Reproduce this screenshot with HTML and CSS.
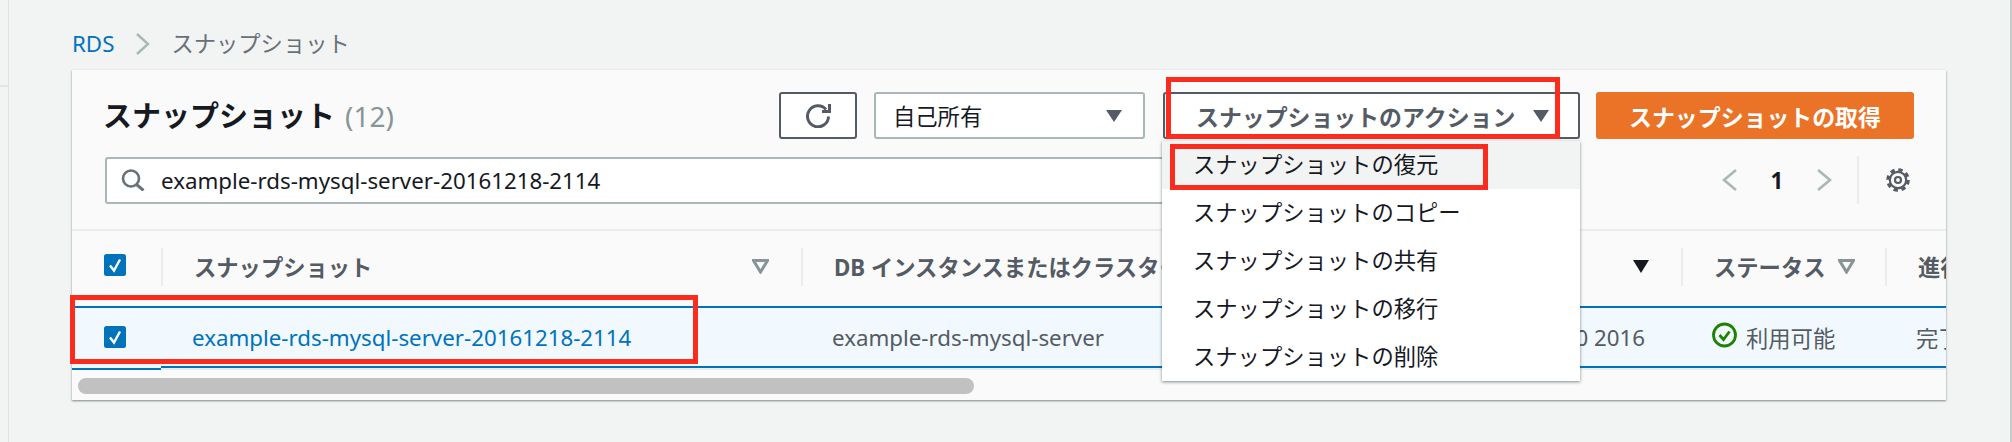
FILE: index.html
```html
<!DOCTYPE html>
<html lang="ja">
<head>
  <meta charset="UTF-8">
  <title>スナップショット</title>
  <link rel="stylesheet" href="styles.css">
</head>
<body>

  <div class="side"><div class="side-rule"></div></div>

  <main class="content">
    <!-- Breadcrumb -->
    <nav class="crumbs">
      <a class="crumb-link">RDS</a>
      <svg class="crumb-sep" viewBox="0 0 15 22"><path d="M2 1l11 10L2 21" fill="none" stroke="#aab7b8" stroke-width="2.4"/></svg>
      <span>スナップショット</span>
    </nav>

    <section class="card">
      <!-- Toolbar -->
      <div class="card-head">
        <div class="toolbar">
          <h1 class="title">スナップショット<span class="count">(12)</span></h1>
          <button class="btn btn-icon">
            <svg width="27" height="25" viewBox="0 0 27 25"><path d="M21 6.500A10.500 10.500 0 1 0 23.500 13.500" fill="none" stroke="#545b64" stroke-width="3"/><path d="M24.500 1v7.500H17" fill="none" stroke="#545b64" stroke-width="3"/></svg>
          </button>
          <div class="select">自己所有<i class="caret"></i></div>
          <button class="btn btn-actions">スナップショットのアクション<i class="caret"></i></button>
          <button class="btn btn-primary">スナップショットの取得</button>
        </div>
        <div class="filter-row">
          <div class="search">
            <svg width="24" height="22" viewBox="0 0 24 22"><circle cx="10" cy="9.500" r="8" fill="none" stroke="#687078" stroke-width="2.6"/><path d="M15.500 15.500l7 6" fill="none" stroke="#687078" stroke-width="3"/></svg>
            <span>example-rds-mysql-server-20161218-2114</span>
          </div>
          <div class="pager">
            <svg class="pager-arrow" viewBox="0 0 15 24"><path d="M14 2L2 12l12 10" fill="none" stroke="#aab7b8" stroke-width="2.6"/></svg>
            <b class="page-num">1</b>
            <svg class="pager-arrow" viewBox="0 0 15 24"><path d="M1 2l12 10L1 22" fill="none" stroke="#aab7b8" stroke-width="2.6"/></svg>
            <span class="pager-sep"></span>
            <svg class="gear" width="24" height="24" viewBox="0 0 24 24"><circle cx="12" cy="12" r="10.300" fill="none" stroke="#545b64" stroke-width="3" stroke-dasharray="4.400 3.690"/><circle cx="12" cy="12" r="8.200" fill="none" stroke="#545b64" stroke-width="2.200"/><circle cx="12" cy="12" r="3" fill="none" stroke="#545b64" stroke-width="2.200"/></svg>
          </div>
        </div>
      </div>

      <!-- Table -->
      <div class="table">
        <div class="th cell-check">
          <svg class="check" viewBox="0 0 22 22"><rect width="22" height="22" rx="2.500" fill="#0073bb"/><path d="M6 11.500l4 5 6-11" fill="none" stroke="#fff" stroke-width="2.400"/></svg>
        </div>
        <div class="th th-line">スナップショット<svg class="filter push" viewBox="0 0 17 15"><path d="M1.500 1.500h14L8.500 13z" fill="none" stroke="#879596" stroke-width="3"/></svg></div>
        <div class="th th-line">DB インスタンスまたはクラスター</div>
        <div class="th th-line">スナップショット作成時間<i class="sorted push"></i></div>
        <div class="th th-line">ステータス<svg class="filter" viewBox="0 0 17 15"><path d="M1.500 1.500h14L8.500 13z" fill="none" stroke="#879596" stroke-width="3"/></svg></div>
        <div class="th th-line">進行状況</div>

        <div class="td td-first">
          <svg class="check" viewBox="0 0 22 22"><rect width="22" height="22" rx="2.500" fill="#0073bb"/><path d="M6 11.500l4 5 6-11" fill="none" stroke="#fff" stroke-width="2.400"/></svg>
        </div>
        <div class="td"><a class="link">example-rds-mysql-server-20161218-2114</a></div>
        <div class="td">example-rds-mysql-server</div>
        <div class="td td-date">Dec 18 21:14 GMT+0900 2016</div>
        <div class="td td-status">
          <svg class="status-icon" width="25" height="26" viewBox="0 0 25 26"><circle cx="12.500" cy="13" r="11" fill="none" stroke="#1d8102" stroke-width="2.800"/><path d="M7.500 13l4 4.500 6-8" fill="none" stroke="#1d8102" stroke-width="2.800"/></svg>
          利用可能
        </div>
        <div class="td">完了</div>
      </div>

      <div class="scroll-track"><div class="scroll-thumb"></div></div>

      <!-- Actions menu -->
      <ul class="menu">
        <li class="menu-hover">スナップショットの復元</li>
        <li>スナップショットのコピー</li>
        <li>スナップショットの共有</li>
        <li>スナップショットの移行</li>
        <li>スナップショットの削除</li>
      </ul>

      <!-- Red annotation boxes -->
      <div class="mark mark-actions"></div>
      <div class="mark mark-restore"></div>
      <div class="mark mark-row"></div>
    </section>
  </main>

  <div class="edge"></div>

</body>
</html>
```

FILE: styles.css
```css
body {
  margin: 0;
  height: 442px;
  overflow: hidden;
  display: flex;
  background-color: #f2f3f3;
  color: #545b64;
  font-family: "Noto Sans", "Noto Sans CJK JP", sans-serif;
  font-size: 22.3px;
}

.side {
  width: 8px;
  border-right: 1px solid #dfe3e3;
  flex-shrink: 0;
}

.side-rule {
  height: 85px;
  border-bottom: 2px solid #e2e5e5;
}

.edge {
  width: 2px;
  margin-left: auto;
  background-color: #c9cccc;
}

.content {
  padding-left: 63px;
  width: 1874px;
}

/* Breadcrumb */
.crumbs {
  height: 70px;
  box-sizing: border-box;
  padding-top: 18px;
  line-height: 32px;
  display: flex;
  align-items: center;
  color: #687078;
  gap: 21px;
}

.crumb-link {
  color: #0073bb;
}

.crumb-sep {
  width: 15px;
  height: 22px;
}

/* Card */
.card {
  position: relative;
  height: 330px;
  background-color: #fafafa;
  box-shadow: 0 1px 2px rgba(0, 28, 36, 0.5);
}

.card-head {
  height: 161px;
  box-sizing: border-box;
  padding: 22px 32px 0 33px;
  border-bottom: 2px solid #eaeded;
}

.toolbar {
  display: flex;
  height: 47px;
  align-items: center;
}

.title {
  margin: -4px auto 0 -2px;
  font-size: 29px;
  font-weight: 700;
  color: #16191f;
}

.count {
  margin-left: 10px;
  font-size: 28px;
  font-weight: 400;
  color: #879596;
}

.btn {
  height: 47px;
  box-sizing: border-box;
  border-radius: 3px;
  font: inherit;
  font-size: 22.9px;
  font-weight: 700;
  display: flex;
  align-items: center;
  justify-content: center;
  padding: 0;
}

.btn-icon {
  width: 78px;
  margin-right: 17px;
  background-color: #ffffff;
  border: 2px solid #545b64;
}

.select {
  width: 271px;
  height: 47px;
  box-sizing: border-box;
  margin-right: 18px;
  padding: 0 21px 0 17px;
  display: flex;
  align-items: center;
  justify-content: space-between;
  background-color: #ffffff;
  border: 2px solid #aab7b8;
  border-radius: 3px;
  color: #16191f;
}

.btn-actions {
  width: 417px;
  margin-right: 16px;
  padding: 0 29px 0 31px;
  justify-content: space-between;
  background-color: #ffffff;
  border: 2px solid #545b64;
  color: #545b64;
}

.btn-primary {
  width: 318px;
  background-color: #ea7327;
  border: none;
  color: #ffffff;
}

.caret {
  width: 0;
  height: 0;
  border-left: 8.500px solid transparent;
  border-right: 8.500px solid transparent;
  border-top: 12px solid #545b64;
}

.filter-row {
  display: flex;
  margin-top: 17px;
  align-items: center;
}

.search {
  width: 1400px;
  height: 47px;
  box-sizing: border-box;
  padding-left: 14px;
  display: flex;
  align-items: center;
  gap: 16px;
  background-color: #ffffff;
  border: 2px solid #aab7b8;
  border-radius: 3px;
  color: #16191f;
}

.pager {
  margin-left: auto;
  padding-right: 4px;
  display: flex;
  align-items: center;
  height: 48px;
}

.pager-arrow {
  width: 15px;
  height: 24px;
}

.page-num {
  width: 80px;
  text-align: center;
  color: #16191f;
}

.pager-sep {
  width: 2px;
  height: 48px;
  margin: 0 27px 0 25px;
  background-color: #eaeded;
}

/* Table */
.table {
  display: grid;
  grid-template-columns: 89px 640px 440px 440px 204px 300px;
  grid-template-rows: 75px 64px;
  overflow: hidden;
}

.th {
  display: flex;
  align-items: center;
  font-weight: 700;
  white-space: nowrap;
}

.th-line {
  padding: 0 32px 0 31px;
  height: 38px;
  align-self: center;
  margin-bottom: 4px;
  border-left: 2px solid #eaeded;
  gap: 12px;
  box-sizing: border-box;
}

.cell-check {
  padding-left: 32px;
  margin-bottom: 7px;
}

.check {
  width: 22px;
  height: 22px;
}

.filter {
  width: 17px;
  height: 15px;
  flex-shrink: 0;
}

.sorted {
  width: 0;
  height: 0;
  flex-shrink: 0;
  border-left: 8.500px solid transparent;
  border-right: 8.500px solid transparent;
  border-top: 13px solid #16191f;
}

.push {
  margin-left: auto;
}

.td {
  display: flex;
  align-items: center;
  padding-left: 31px;
  margin-bottom: 2px;
  white-space: nowrap;
  background-color: #f1f8fe;
  border-top: 2px solid #0073bb;
  border-bottom: 2px solid #0073bb;
  box-shadow: 0 2px 0 #eaeded;
  box-sizing: border-box;
}

.td-first {
  padding-left: 32px;
  padding-bottom: 2px;
  margin-bottom: 0;
  box-shadow: none;
}

.td-date {
  justify-content: flex-end;
  padding-right: 36px;
}

.td-status {
  gap: 9px;
}

.status-icon {
  margin-bottom: 4px;
}

.link {
  color: #0073bb;
}

/* Scrollbar */
.scroll-track {
  padding: 8px 6px 0;
}

.scroll-thumb {
  width: 896px;
  height: 16px;
  border-radius: 8px;
  background-color: #c1c1c1;
}

/* Actions menu */
.menu {
  position: absolute;
  left: 1090px;
  top: 71px;
  width: 418px;
  margin: 0;
  padding: 0;
  list-style: none;
  background-color: #ffffff;
  box-shadow: 0 1px 3px rgba(0, 28, 36, 0.5);
  color: #16191f;
}

.menu li {
  height: 48px;
  line-height: 48px;
  padding-left: 31px;
}

.menu-hover {
  background-color: #f2f3f3;
}

/* Red annotation boxes */
.mark {
  position: absolute;
  box-sizing: border-box;
  border: 5px solid #fb2c1e;
}

.mark-actions {
  left: 1094px;
  top: 7px;
  width: 394px;
  height: 62px;
}

.mark-restore {
  left: 1098px;
  top: 74px;
  width: 318px;
  height: 46px;
}

.mark-row {
  left: -2px;
  top: 225px;
  width: 628px;
  height: 69px;
}
```
